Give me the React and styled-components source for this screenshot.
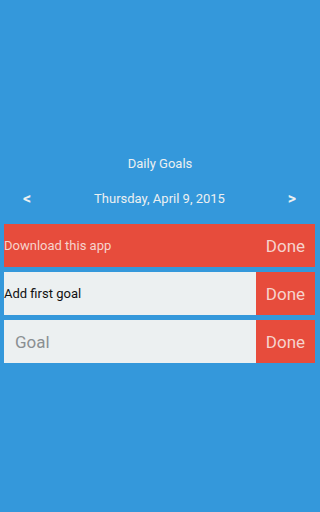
import React from "react";
import styled, { createGlobalStyle } from "styled-components";

const GlobalStyle = createGlobalStyle`
  html, body {
    margin: 0;
    padding: 0;
    background: #3498db;
    font-family: Roboto, "Liberation Sans", sans-serif;
  }
`;

const goals = [
  { text: "Download this app", done: true },
  { text: "Add first goal", done: false },
];

const App = () => {
  return (
    <Page>
      <GlobalStyle />
      <Title>Daily Goals</Title>
      <DateBar>
        <Arrow>&lt;</Arrow>
        <DateText>Thursday, April 9, 2015</DateText>
        <Arrow>&gt;</Arrow>
      </DateBar>
      <List>
        {goals.map((g) => (
          <Row key={g.text} $done={g.done}>
            <GoalText $done={g.done}>{g.text}</GoalText>
            <DoneButton>Done</DoneButton>
          </Row>
        ))}
        <Row>
          <GoalInput placeholder="Goal" />
          <DoneButton>Done</DoneButton>
        </Row>
      </List>
    </Page>
  );
};

const Page = styled.div`
  width: 320px;
  height: 512px;
  background: #3498db;
  padding-top: 155px;
  box-sizing: border-box;
`;
const Title = styled.div`
  text-align: center;
  color: #ecf0f1;
  font-size: 13px;
  line-height: 18px;
`;
const DateBar = styled.div`
  display: flex;
  align-items: center;
  justify-content: space-between;
  padding: 0 23px 0 22px;
  margin-top: 16px;
  height: 18px;
`;
const Arrow = styled.span`
  color: #ecf0f1;
  font-size: 16px;
  font-weight: bold;
  width: 10px;
  text-align: center;
`;
const DateText = styled.span`
  color: #ecf0f1;
  font-size: 13px;
`;
const List = styled.div`
  display: flex;
  flex-direction: column;
  gap: 5px;
  padding: 0 5px 0 4px;
  margin-top: 17px;
`;
const Row = styled.div`
  display: flex;
  height: 43px;
  background: ${(p) => (p.$done ? "#e74c3c" : "#ecf0f1")};
`;
const GoalText = styled.div`
  flex: 1;
  display: flex;
  align-items: center;
  font-size: 13px;
  color: ${(p) => (p.$done ? "#f6d3cd" : "#111")};
`;
const GoalInput = styled.input`
  flex: 1;
  min-width: 0;
  border: none;
  outline: none;
  background: transparent;
  font-family: inherit;
  font-size: 17px;
  padding: 0 0 0 11px;
  color: #333;
  &::placeholder {
    color: #8a8f92;
  }
`;
const DoneButton = styled.div`
  width: 59px;
  display: flex;
  align-items: center;
  justify-content: center;
  background: #e74c3c;
  color: #f6d3cd;
  font-size: 17px;
`;

export default App;
